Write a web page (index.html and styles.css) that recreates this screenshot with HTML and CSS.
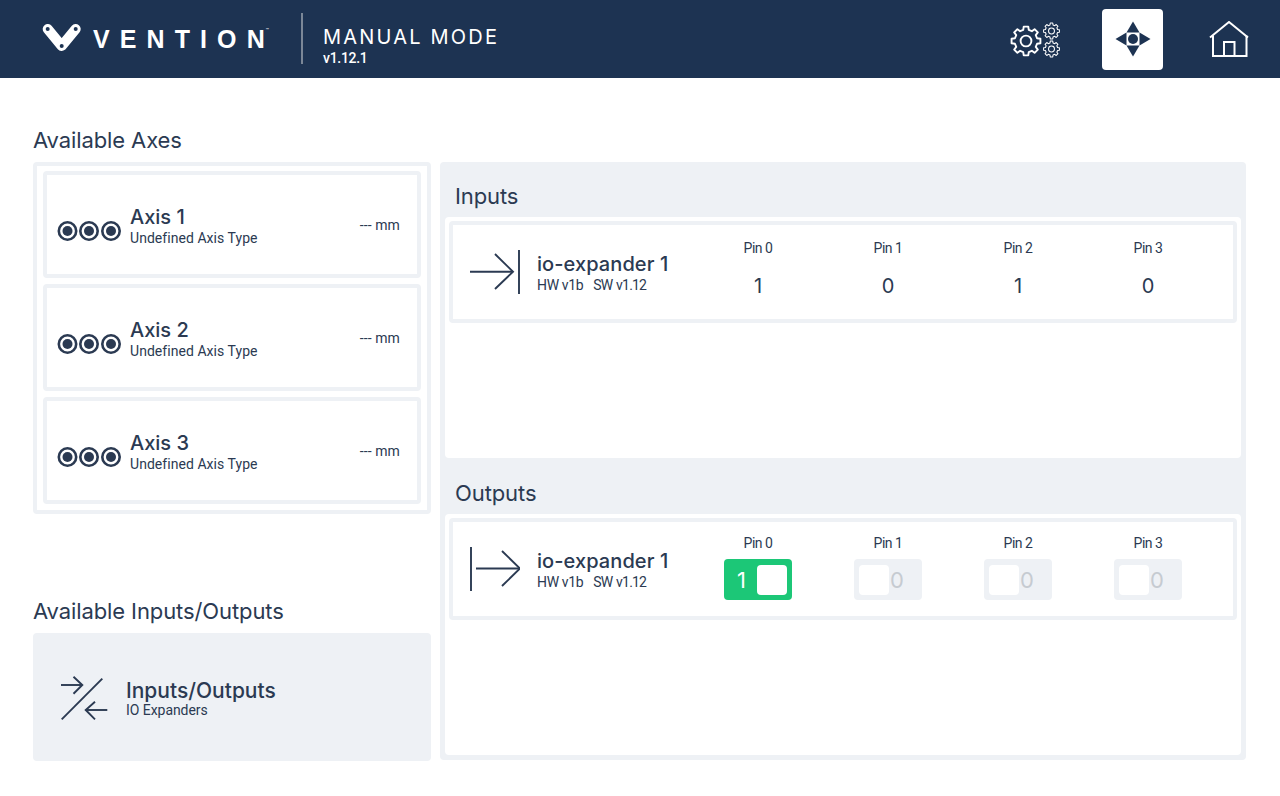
FILE: index.html
```html
<!DOCTYPE html>
<html lang="en">
<head>
    <meta charset="UTF-8">
    <title>Manual Mode</title>
    <link rel="stylesheet" href="styles.css">
</head>
<body>
    <svg class="defs" width="0" height="0">
        <defs>
            <g id="gear">
                <polygon points="7.57,-1.89 9.88,-1.56 9.88,1.56 7.57,1.89 6.69,4.02 8.09,5.88 5.88,8.09 4.02,6.69 1.89,7.57 1.56,9.88 -1.56,9.88 -1.89,7.57 -4.02,6.69 -5.88,8.09 -8.09,5.88 -6.69,4.02 -7.57,1.89 -9.88,1.56 -9.88,-1.56 -7.57,-1.89 -6.69,-4.02 -8.09,-5.88 -5.88,-8.09 -4.02,-6.69 -1.89,-7.57 -1.56,-9.88 1.56,-9.88 1.89,-7.57 4.02,-6.69 5.88,-8.09 8.09,-5.88 6.69,-4.02"/>
                <circle r="3.7"/>
            </g>
            <g id="axis-icon">
                <circle class="ring" cx="10.5" cy="11" r="8.7"/>
                <circle class="dot" cx="10.5" cy="11" r="5"/>
                <circle class="ring" cx="32" cy="11" r="8.7"/>
                <circle class="dot" cx="32" cy="11" r="5"/>
                <circle class="ring" cx="54" cy="11" r="8.7"/>
                <circle class="dot" cx="54" cy="11" r="5"/>
            </g>
        </defs>
    </svg>

    <!-- Header -->
    <header class="topbar">
        <div class="brand">
            <svg class="logo-mark" width="42" height="32" viewBox="0 0 42 32">
                <polyline points="6.7,6 20.7,23 34.7,6"/>
                <circle cx="6.7" cy="6" r="2"/>
                <circle cx="20.7" cy="23" r="2"/>
                <circle cx="34.7" cy="6" r="2"/>
            </svg>
            <span class="logo-text">VENTIO<span class="logo-last">N</span></span><span class="logo-tm">™</span>
        </div>
        <div class="mode">
            <div class="mode-title">MANUAL MODE</div>
            <div class="mode-version">v1.12.1</div>
        </div>
        <nav class="topnav">
            <button class="nav-btn nav-gears">
                <svg class="icon-gears" width="52" height="38" viewBox="0 0 52 38">
                    <use href="#gear" transform="translate(16 21) scale(1.46)"/>
                    <use href="#gear" transform="translate(41.5 11) scale(.8)"/>
                    <use href="#gear" transform="translate(41.5 29) scale(.8)"/>
                </svg>
            </button>
            <button class="nav-btn nav-active">
                <svg width="36" height="36" viewBox="0 0 36 36">
                    <polygon class="fill-navy" points="18,0.5 24.5,11.5 11.5,11.5"/>
                    <polygon class="fill-navy" points="18,35.5 24.5,24.5 11.5,24.5"/>
                    <polygon class="fill-navy" points="0.5,18 11.5,11.5 11.5,24.5"/>
                    <polygon class="fill-navy" points="35.5,18 24.5,11.5 24.5,24.5"/>
                    <circle class="fill-navy" cx="18" cy="18" r="5"/>
                </svg>
            </button>
            <button class="nav-btn nav-home">
                <svg class="icon-home" width="40" height="36" viewBox="0 0 40 36">
                    <polyline points="1,16.5 20,1 39,16.5"/>
                    <polyline points="4,14.5 4,35 37.5,35 37.5,14.5"/>
                    <polyline points="15,35 15,21 25.5,21 25.5,35"/>
                </svg>
            </button>
        </nav>
    </header>

    <main class="layout">
        <!-- Colonne gauche -->
        <div class="left-col">
            <h2 class="section-title">Available Axes</h2>
            <div class="axes-box">
                <div class="axis-card">
                    <svg class="axis-icon" width="66" height="22" viewBox="0 0 66 22"><use href="#axis-icon"/></svg>
                    <div class="axis-info">
                        <div class="item-name">Axis 1</div>
                        <div class="item-sub">Undefined Axis Type</div>
                    </div>
                    <div class="axis-value">--- mm</div>
                </div>
                <div class="axis-card">
                    <svg class="axis-icon" width="66" height="22" viewBox="0 0 66 22"><use href="#axis-icon"/></svg>
                    <div class="axis-info">
                        <div class="item-name">Axis 2</div>
                        <div class="item-sub">Undefined Axis Type</div>
                    </div>
                    <div class="axis-value">--- mm</div>
                </div>
                <div class="axis-card">
                    <svg class="axis-icon" width="66" height="22" viewBox="0 0 66 22"><use href="#axis-icon"/></svg>
                    <div class="axis-info">
                        <div class="item-name">Axis 3</div>
                        <div class="item-sub">Undefined Axis Type</div>
                    </div>
                    <div class="axis-value">--- mm</div>
                </div>
            </div>

            <h2 class="section-title io-title">Available Inputs/Outputs</h2>
            <div class="io-link">
                <svg class="line-icon" width="48" height="44" viewBox="0 0 48 44">
                    <polyline points="1,9 22,9"/>
                    <polyline points="13.5,0.7 22.3,9 13.5,17.7"/>
                    <line x1="42.3" y1="2.7" x2="1.7" y2="43.3"/>
                    <polyline points="47.3,34 25.7,34"/>
                    <polyline points="35,25.7 25.7,34 35,43.3"/>
                </svg>
                <div class="io-link-text">
                    <div class="item-name">Inputs/Outputs</div>
                    <div class="item-sub">IO Expanders</div>
                </div>
            </div>
        </div>

        <!-- Panneau droit -->
        <div class="right-panel">
            <h2 class="panel-title">Inputs</h2>
            <div class="panel-list">
                <div class="io-card">
                    <svg class="line-icon" width="50" height="44" viewBox="0 0 50 44">
                        <polyline points="0,21.7 43,21.7"/>
                        <polyline points="25,4 43,21.7 25,39"/>
                        <line x1="49" y1="0" x2="49" y2="44"/>
                    </svg>
                    <div class="io-info">
                        <div class="item-name">io-expander 1</div>
                        <div class="item-sub"><span>HW v1b</span><span>SW v1.12</span></div>
                    </div>
                    <div class="pins">
                        <div class="pin pin-read"><div class="pin-label">Pin 0</div><div class="pin-value">1</div></div>
                        <div class="pin pin-read"><div class="pin-label">Pin 1</div><div class="pin-value">0</div></div>
                        <div class="pin pin-read"><div class="pin-label">Pin 2</div><div class="pin-value">1</div></div>
                        <div class="pin pin-read"><div class="pin-label">Pin 3</div><div class="pin-value">0</div></div>
                    </div>
                </div>
            </div>

            <h2 class="panel-title panel-title-out">Outputs</h2>
            <div class="panel-list">
                <div class="io-card">
                    <svg class="line-icon" width="50" height="44" viewBox="0 0 50 44">
                        <line x1="1" y1="0" x2="1" y2="44"/>
                        <polyline points="6,21.5 50,21.5"/>
                        <polyline points="32,4 50,21.5 32,39"/>
                    </svg>
                    <div class="io-info">
                        <div class="item-name">io-expander 1</div>
                        <div class="item-sub"><span>HW v1b</span><span>SW v1.12</span></div>
                    </div>
                    <div class="pins">
                        <div class="pin pin-write"><div class="pin-label">Pin 0</div><div class="toggle on"><span>1</span><i></i></div></div>
                        <div class="pin pin-write"><div class="pin-label">Pin 1</div><div class="toggle"><i></i><span>0</span></div></div>
                        <div class="pin pin-write"><div class="pin-label">Pin 2</div><div class="toggle"><i></i><span>0</span></div></div>
                        <div class="pin pin-write"><div class="pin-label">Pin 3</div><div class="toggle"><i></i><span>0</span></div></div>
                    </div>
                </div>
            </div>
        </div>
    </main>
</body>
</html>
```

FILE: styles.css
```css
/* Page */
* {
    box-sizing: border-box;
}

body {
    margin: 0;
    font-family: 'Inter', sans-serif;
    background: #fff;
    color: #2b3a52;
}

.defs {
    display: block;
    height: 0;
}

/* Header */
.topbar {
    display: flex;
    align-items: center;
    height: 78px;
    background: #1d3352;
    color: #fff;
}

.brand {
    display: flex;
    align-items: center;
    height: 51px;
    padding-left: 41px;
    margin-top: -1px;
    border-right: 2px solid #7b8797;
    flex: 0 0 303px;
}

.logo-mark polyline {
    fill: none;
    stroke: #fff;
    stroke-width: 10;
    stroke-linecap: round;
    stroke-linejoin: round;
}

.logo-mark circle {
    fill: #1d3352;
}

.logo-text {
    margin-left: 10px;
    padding-top: 2px;
    font-family: 'Liberation Sans', sans-serif;
    font-weight: 700;
    font-size: 25px;
    letter-spacing: 10.1px;
}

.logo-last {
    letter-spacing: 0;
}

.logo-tm {
    align-self: flex-start;
    margin: 14px 0 0 1px;
    font-size: 5px;
}

.mode {
    align-self: flex-start;
    margin: 26px 0 0 20px;
}

.mode-title {
    font-size: 20px;
    line-height: 22px;
    letter-spacing: 2.2px;
}

.mode-version {
    margin-top: 2px;
    font-family: 'Roboto', sans-serif;
    font-weight: 500;
    font-size: 14px;
    line-height: 16px;
    letter-spacing: -.3px;
}

.topnav {
    display: flex;
    align-items: center;
    margin-left: auto;
    margin-right: 31px;
}

.nav-btn {
    display: flex;
    align-items: center;
    justify-content: center;
    padding: 0;
    border: 0;
    background: none;
}

.nav-gears {
    width: 52px;
    margin-right: 40px;
}

.icon-gears use {
    fill: none;
    stroke: #fff;
    stroke-width: 1.3;
    stroke-linejoin: round;
}

.nav-active {
    width: 61px;
    height: 61px;
    background: #fff;
    border-radius: 4px;
}

.fill-navy {
    fill: #1d3352;
}

.nav-home {
    margin-left: 46px;
}

.icon-home polyline {
    fill: none;
    stroke: #fff;
    stroke-width: 2;
}

/* Layout */
.layout {
    display: grid;
    grid-template-columns: 398px 806px;
    column-gap: 9px;
    padding-left: 33px;
}

.section-title {
    margin: 0;
    font-weight: 400;
    font-size: 22px;
    line-height: 26px;
    letter-spacing: -.1px;
}

/* Colonne gauche */
.left-col {
    padding-top: 49px;
}

.axes-box {
    margin-top: 9px;
    padding: 5px 6px 6px;
    border: 4px solid #eef1f5;
    border-radius: 4px;
    display: flex;
    flex-direction: column;
    gap: 6px;
}

.axis-card {
    display: flex;
    align-items: center;
    height: 107px;
    padding: 0 17px 0 10px;
    border: 4px solid #eef1f5;
    border-radius: 4px;
}

.axis-icon {
    margin-top: 12px;
    flex: none;
}

.ring {
    fill: none;
    stroke: #2b3a52;
    stroke-width: 2.6;
}

.dot {
    fill: #2b3a52;
}

.axis-info {
    margin-left: 7px;
    margin-top: 3px;
}

.item-name {
    font-weight: 500;
    font-size: 20px;
    line-height: 22px;
}

.item-sub {
    margin-top: 2px;
    font-family: 'Roboto', sans-serif;
    font-size: 14px;
    line-height: 16px;
    letter-spacing: .05px;
}

.axis-value {
    margin-left: auto;
    font-family: 'Roboto', sans-serif;
    font-size: 14px;
    letter-spacing: .1px;
}

.io-title {
    margin-top: 84px;
}

.io-link {
    display: flex;
    align-items: center;
    height: 128px;
    margin-top: 9px;
    padding-left: 27px;
    background: #eef1f5;
    border-radius: 4px;
}

.io-link .line-icon {
    margin-right: 18px;
    margin-top: 2px;
}

.io-link-text {
    margin-top: 4px;
}

.io-link-text .item-name {
    font-size: 21px;
}

.io-link-text .item-sub {
    margin-top: 0;
    letter-spacing: -.05px;
}

.line-icon {
    flex: none;
}

.line-icon polyline,
.line-icon line {
    fill: none;
    stroke: #2b3a52;
    stroke-width: 1.9;
}

/* Panneau droit */
.right-panel {
    margin-top: 84px;
    height: 598px;
    padding: 0 5px 5px;
    background: #eef1f5;
    border-radius: 4px;
}

.panel-title {
    margin: 0;
    padding: 21px 0 7px 10px;
    font-weight: 400;
    font-size: 22px;
    line-height: 27px;
    letter-spacing: -.1px;
}

.panel-title-out {
    padding-top: 22px;
}

.panel-list {
    height: 241px;
    padding: 4px;
    background: #fff;
    border-radius: 4px;
}

.io-card {
    display: flex;
    align-items: center;
    height: 102px;
    padding-left: 17px;
    border: 4px solid #eef1f5;
    border-radius: 4px;
}

.io-info {
    margin-left: 17px;
    margin-top: 2px;
    width: 156px;
    flex: none;
}

.io-info .item-name {
    letter-spacing: .08px;
}

.io-info .item-sub {
    display: flex;
    gap: 10px;
    letter-spacing: -.35px;
}

.io-info .item-sub span + span {
    letter-spacing: -.8px;
    word-spacing: 1px;
}

.pins {
    display: grid;
    grid-template-columns: repeat(4, 130px);
}

.pin {
    display: flex;
    flex-direction: column;
    align-items: center;
}

.pin-read {
    padding-bottom: 6px;
}

.pin-write {
    padding-bottom: 3px;
}

.pin-label {
    font-family: 'Roboto', sans-serif;
    font-size: 14px;
    line-height: 16px;
    letter-spacing: -.5px;
}

.pin-value {
    margin-top: 18px;
    font-size: 20px;
    line-height: 24px;
}

/* Interrupteurs */
.toggle {
    display: flex;
    align-items: center;
    justify-content: space-between;
    width: 68px;
    height: 41px;
    margin-top: 8px;
    padding: 0 5px;
    background: #eef1f5;
    border-radius: 4px;
    color: #c6cbd1;
    font-size: 22px;
}

.toggle i {
    width: 30px;
    height: 30px;
    background: #fff;
    border-radius: 4px;
}

.toggle span {
    flex: 1;
    padding-left: 1px;
}

.toggle.on {
    background: #1cc777;
    color: #fff;
}

.toggle.on span {
    padding-left: 8px;
}
```
